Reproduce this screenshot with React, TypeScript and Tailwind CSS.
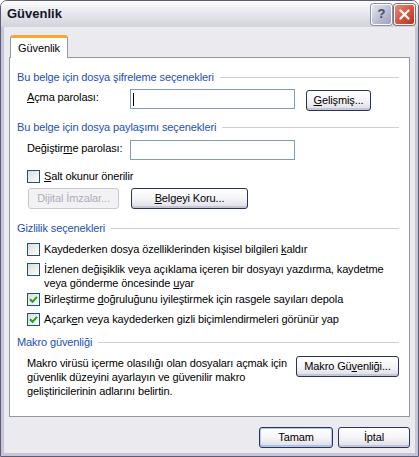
import React from "react";

const FONT = { fontFamily: "Tahoma, 'Liberation Sans', 'DejaVu Sans', sans-serif" };

function Heading({ children }: { children: React.ReactNode }) {
  return (
    <div className="flex items-center h-[13px] leading-[13px] text-[#2150b6]">
      <span className="whitespace-nowrap">{children}</span>
      <div className="flex-1 ml-[6px] h-px bg-[#cfd0d8]" />
    </div>
  );
}

function Button({
  width,
  disabled,
  isDefault,
  children,
}: {
  width: string;
  disabled?: boolean;
  isDefault?: boolean;
  children: React.ReactNode;
}) {
  if (disabled) {
    return (
      <div
        className={`${width} h-[21px] shrink-0 flex items-center justify-center rounded-[3px] border border-[#c9c7d0] bg-[#f2f2f4] text-[#aeadb8]`}
      >
        {children}
      </div>
    );
  }
  return (
    <div
      className={`${width} h-[21px] shrink-0 flex items-center justify-center rounded-[3px] border border-[#27325f] bg-gradient-to-b from-white via-[#f5f5f8] to-[#dcdce6] text-black ${
        isDefault
          ? "shadow-[inset_0_0_0_1px_#b6c8ea,inset_0_-2px_0_#a9bde3]"
          : "shadow-[inset_0_-2px_0_#c6c6d2]"
      }`}
    >
      {children}
    </div>
  );
}

function Checkbox({ checked }: { checked?: boolean }) {
  return (
    <div className="w-[13px] h-[13px] shrink-0 border border-[#1c5180] bg-gradient-to-br from-[#dcdcd6] to-white flex items-center justify-center">
      {checked && (
        <svg width="9" height="9" viewBox="0 0 9 9">
          <path d="M1 4.2 L3.5 6.8 L8 1.8" stroke="#21a121" strokeWidth="2" fill="none" />
        </svg>
      )}
    </div>
  );
}

function CheckRow({
  checked,
  children,
  className = "",
}: {
  checked?: boolean;
  children: React.ReactNode;
  className?: string;
}) {
  return (
    <div className={`flex items-start ml-[10px] ${className}`}>
      <div className="mt-px">
        <Checkbox checked={checked} />
      </div>
      <div className="ml-[4px] leading-[14px]">{children}</div>
    </div>
  );
}

function Input({ caret }: { caret?: boolean }) {
  return (
    <div className="w-[165px] h-[20px] shrink-0 border border-[#7f9db9] bg-white flex items-center pl-[2px]">
      {caret && <div className="w-px h-[13px] bg-black" />}
    </div>
  );
}

export default function App() {
  return (
    <div
      style={FONT}
      className="w-[419px] h-[457px] flex flex-col border border-[#5c5b7c] rounded-t-[7px] overflow-hidden bg-[#ebebef] text-[11px] tracking-[-0.12px] text-black"
    >
      {/* Title bar */}
      <div className="h-[26px] shrink-0 flex items-center pl-[6px] pr-[3px] bg-gradient-to-b from-[#fdfdfe] via-[#e6e6ec] to-[#d3d3dd]">
        <span className="text-[13px] font-bold tracking-normal text-[#15152a] flex-1">Güvenlik</span>
        <div className="w-[21px] h-[21px] rounded-[3px] border border-white bg-gradient-to-br from-[#e4e6f2] to-[#9aa0bd] shadow-[0_0_0_1px_#8e90a8] flex items-center justify-center text-[13px] font-bold text-[#4a4a5e]">
          ?
        </div>
        <div className="ml-[2px] w-[21px] h-[21px] rounded-[3px] border border-white bg-gradient-to-br from-[#e98a78] via-[#d9553f] to-[#b8321f] shadow-[0_0_0_1px_#9a6a6a] flex items-center justify-center">
          <svg width="11" height="11" viewBox="0 0 11 11">
            <path d="M1.5 1.5 L9.5 9.5 M9.5 1.5 L1.5 9.5" stroke="white" strokeWidth="2.2" strokeLinecap="round" />
          </svg>
        </div>
      </div>

      {/* Body */}
      <div className="flex-1 flex flex-col border-x-[3px] border-b-[3px] border-[#c6c5d3] px-[5px] pt-[8px]">
        {/* Tab strip */}
        <div className="flex h-[22px] ml-px">
          <div className="w-[58px] h-[23px] rounded-t-[3px] border-x border-[#919b9c] border-t-[3px] border-t-[#f5a732] bg-white flex items-center justify-center z-10 pt-px">
            Güvenlik
          </div>
        </div>

        {/* Panel */}
        <div className="h-[360px] border border-[#919b9c] bg-white pl-[7px] pr-[10px] pt-[13px] flex flex-col">
          <Heading>Bu belge için dosya şifreleme seçenekleri</Heading>

          <div className="flex items-start mt-[5px] ml-[10px] h-[22px]">
            <div className="w-[103px] mt-[2px] leading-[13px]">
              <u>A</u>çma parolası:
            </div>
            <Input caret />
            <div className="ml-[11px] mt-px">
              <Button width="w-[65px]">
                <span>
                  <u>G</u>elişmiş...
                </span>
              </Button>
            </div>
          </div>

          <div className="mt-[10px]">
            <Heading>Bu belge için dosya paylaşımı seçenekleri</Heading>
          </div>

          <div className="flex items-start mt-[6px] ml-[10px] h-[20px]">
            <div className="w-[103px] mt-[2px] leading-[13px]">
              Değiştir<u>m</u>e parolası:
            </div>
            <Input />
          </div>

          <div className="flex items-center mt-[10px] ml-[10px] h-[13px]">
            <Checkbox />
            <div className="ml-[4px] leading-[13px]">
              <u>S</u>alt okunur önerilir
            </div>
          </div>

          <div className="flex mt-[5px] ml-[11px]">
            <Button width="w-[91px]" disabled>
              Dijital İmzalar...
            </Button>
            <div className="ml-[12px]">
              <Button width="w-[117px]">
                <span>
                  <u>B</u>elgeyi Koru...
                </span>
              </Button>
            </div>
          </div>

          <div className="mt-[13px]">
            <Heading>Gizlilik seçenekleri</Heading>
          </div>

          <CheckRow className="mt-[7px]">
            Kaydederken dosya özelliklerinden kişisel bilgileri <u>k</u>aldır
          </CheckRow>
          <CheckRow className="mt-[6px]">
            İzlenen değişiklik veya açıklama içeren bir dosyayı yazdırma, kaydetme
            <br />
            veya gönderme öncesinde <u>u</u>yar
          </CheckRow>
          <CheckRow checked className="mt-[2px]">
            Birleştirme <u>d</u>oğruluğunu iyileştirmek için rasgele sayıları depola
          </CheckRow>
          <CheckRow checked className="mt-[6px]">
            Açark<u>e</u>n veya kaydederken gizli biçimlendirmeleri görünür yap
          </CheckRow>

          <div className="mt-[10px]">
            <Heading>Makro güvenliği</Heading>
          </div>

          <div className="flex items-start mt-[7px] ml-[10px]">
            <p className="flex-1 leading-[14px] whitespace-nowrap">
              Makro virüsü içerme olasılığı olan dosyaları açmak için
              <br />
              güvenlik düzeyini ayarlayın ve güvenilir makro
              <br />
              geliştiricilerinin adlarını belirtin.
            </p>
            <Button width="w-[103px]">
              <span>
                Makro Gü<u>v</u>enliği...
              </span>
            </Button>
          </div>
        </div>

        {/* Footer buttons */}
        <div className="flex justify-end mt-[10px] gap-[5px]">
          <Button width="w-[74px]" isDefault>
            Tamam
          </Button>
          <Button width="w-[72px]">İptal</Button>
        </div>
      </div>
    </div>
  );
}
